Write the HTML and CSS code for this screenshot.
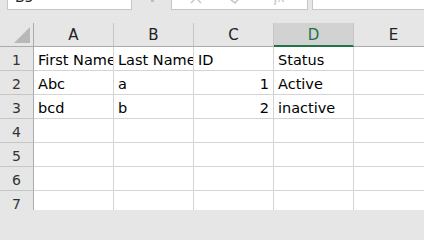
FILE: index.html
```html
<!DOCTYPE html>
<html>
<head>
<meta charset="utf-8">
<link rel="stylesheet" href="styles.css">
</head>
<body>
<div class="topbar">
  <div class="namebox">B5</div>
  <div class="dots"></div>
  <div class="fxbox">
    <svg width="135" height="24" viewBox="0 0 135 24">
      <path d="M19 8 L29 18 M29 8 L19 18" stroke="#c4c4c4" stroke-width="1.4" fill="none"/>
      <path d="M54 11 L63 18 L75 5" stroke="#c4c4c4" stroke-width="1.4" fill="none"/>
      <text x="102" y="17" font-family="Liberation Serif, serif" font-style="italic" font-size="15" fill="#c4c4c4">fx</text>
    </svg>
  </div>
  <div class="input"></div>
</div>
<div class="sheet">
  <div class="cell corner"><svg width="16" height="16" viewBox="0 0 16 16"><polygon points="16,0 16,16 0,16" fill="#b8b8b8"/></svg></div>
  <div class="cell colhead">A</div>
  <div class="cell colhead">B</div>
  <div class="cell colhead">C</div>
  <div class="cell colhead sel">D</div>
  <div class="cell colhead">E</div>

  <div class="cell rowhead">1</div>
  <div class="cell">First Name</div>
  <div class="cell">Last Name</div>
  <div class="cell">ID</div>
  <div class="cell">Status</div>
  <div class="cell"></div>

  <div class="cell rowhead">2</div>
  <div class="cell">Abc</div>
  <div class="cell">a</div>
  <div class="cell num">1</div>
  <div class="cell">Active</div>
  <div class="cell"></div>

  <div class="cell rowhead">3</div>
  <div class="cell">bcd</div>
  <div class="cell">b</div>
  <div class="cell num">2</div>
  <div class="cell">inactive</div>
  <div class="cell"></div>

  <div class="cell rowhead">4</div>
  <div class="cell"></div><div class="cell"></div><div class="cell"></div><div class="cell"></div><div class="cell"></div>

  <div class="cell rowhead">5</div>
  <div class="cell"></div><div class="cell"></div><div class="cell"></div><div class="cell"></div><div class="cell"></div>

  <div class="cell rowhead">6</div>
  <div class="cell"></div><div class="cell"></div><div class="cell"></div><div class="cell"></div><div class="cell"></div>

  <div class="cell rowhead">7</div>
  <div class="cell"></div><div class="cell"></div><div class="cell"></div><div class="cell"></div><div class="cell"></div>
</div>
</body>
</html>
```
FILE: styles.css
```css
html, body {
  margin: 0;
  padding: 0;
}
body {
  width: 424px;
  height: 210px;
  overflow: hidden;
  background: #e6e6e6;
  font-family: "DejaVu Sans", sans-serif;
}
.topbar {
  display: flex;
  align-items: flex-start;
  height: 23px;
}
.namebox {
  box-sizing: border-box;
  flex: none;
  width: 125px;
  height: 26px;
  margin: -16px 0 0 7px;
  padding: 4px 0 0 7px;
  background: #fff;
  border: 1px solid #c6c6c6;
  font-size: 14px;
  line-height: 16px;
  color: #222;
}
.dots {
  flex: none;
  width: 3px;
  height: 2px;
  margin-left: 19px;
  background: #bdbdbd;
}
.fxbox {
  box-sizing: border-box;
  flex: none;
  width: 137px;
  height: 26px;
  margin: -16px 0 0 17px;
  background: #fff;
  border: 1px solid #c6c6c6;
}
.fxbox svg {
  display: block;
}
.input {
  box-sizing: border-box;
  flex: 1;
  height: 26px;
  margin: -16px -10px 0 4px;
  background: #fff;
  border: 1px solid #c6c6c6;
}
.sheet {
  display: grid;
  grid-template-columns: 34px repeat(5, 80px);
  grid-auto-rows: 24px;
  width: 434px;
  background: #fff;
}
.cell {
  box-sizing: border-box;
  border-right: 1px solid #d4d4d4;
  border-bottom: 1px solid #d4d4d4;
  padding: 1px 3px 0 4px;
  font-size: 14.5px;
  line-height: 24px;
  white-space: nowrap;
  overflow: hidden;
  color: #000;
}
.num {
  text-align: right;
  padding-right: 4px;
}
.corner {
  display: flex;
  justify-content: flex-end;
  align-items: flex-end;
  padding: 0 3px 3px 0;
  background: #e6e6e6;
  border-right: 1px solid #ababab;
  border-bottom: 1px solid #ababab;
}
.corner svg {
  display: block;
}
.colhead {
  background: #e6e6e6;
  border-right: 1px solid #c6c6c6;
  border-bottom: 1px solid #ababab;
  font-size: 15px;
  line-height: 21px;
  padding: 2px 0 0 0;
  text-align: center;
  color: #222;
}
.colhead.sel {
  background: #d2d2d2;
  color: #217346;
  border-bottom: 2px solid #217346;
}
.rowhead {
  background: #e6e6e6;
  border-right: 1px solid #ababab;
  border-bottom: 1px solid #c6c6c6;
  padding: 1px 0 0 0;
  font-size: 14px;
  text-align: center;
  color: #333;
}
```
